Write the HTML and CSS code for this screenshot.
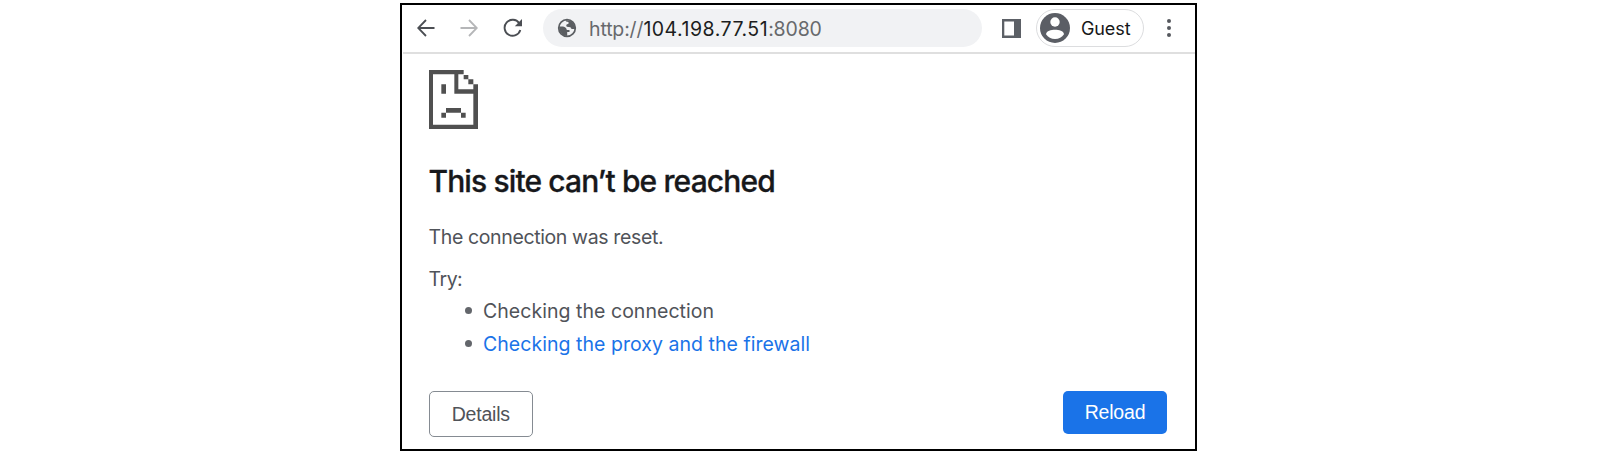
FILE: index.html
```html
<!DOCTYPE html>
<html lang="en">
<head>
<meta charset="utf-8">
<title>This site can’t be reached</title>
<link rel="stylesheet" href="styles.css">
</head>
<body>
<div class="window">
  <header class="toolbar">
    <svg class="nav back" viewBox="0 0 18 18"><path d="M17.5 9H1.5M9 1L1.2 9L9 17"/></svg>
    <svg class="nav forward" viewBox="0 0 18 18"><path d="M.5 9h16M9 1l7.8 8L9 17"/></svg>
    <svg class="nav reload" viewBox="0 0 20 20"><path d="M17.3 12A8 8 0 1 1 16.2 5.2"/><path class="solid" d="M19 1v7.2h-7.200z"/></svg>
    <div class="address">
      <svg class="globe" viewBox="0 0 20 20"><circle cx="10" cy="10" r="8.300"/><path d="M9.300 2 L15 3.500 L18.200 8.500 L18.300 11 L15 11 Q13.800 11 13.500 9.300 L9.800 8.800 Q8.700 8 9.600 6.500 L11.500 5.800 V4 L9 3.600Z M2 8.500 H6 Q9.500 9 9.800 12 H12.500 V14 H10.200 V18 L6.500 17.500 L2.500 13Z"/></svg>
      <span class="url">http://<b>104.198.77.51</b>:8080</span>
    </div>
    <svg class="panel" viewBox="0 0 19 19"><path d="M0 0h19v19H0zM2.300 2.600v13.800h9.700V2.600z" fill-rule="evenodd"/></svg>
    <div class="profile">
      <svg class="avatar" viewBox="0 0 30 30"><circle class="disc" cx="15" cy="15" r="15"/><circle cx="15" cy="9" r="4.700"/><path d="M6 21.300C6.500 17.600 11 16.700 15 16.700S23.500 17.600 24 21.300C22 24.300 18.800 26 15 26S8 24.300 6 21.300Z"/></svg>
      <span>Guest</span>
    </div>
    <svg class="more" viewBox="0 0 4 18"><circle cx="2" cy="2" r="2"/><circle cx="2" cy="9" r="2"/><circle cx="2" cy="16" r="2"/></svg>
  </header>
  <main class="content">
    <svg class="sad" viewBox="0 0 147 177"><path d="M0 0h104v13H88v45h45V43h14v134H0zM12 13v151h121V71H76V13z" fill-rule="evenodd"/><path d="M104 15h14v13h-14zM118 28h15v15h-15zM37 43h14v28H37zM51 114h45v14H51zM37 128h14v15H37zM96 128h14v15H96z"/></svg>
    <h1>This site can’t be reached</h1>
    <p class="reason">The connection was reset.</p>
    <p class="try">Try:</p>
    <ul>
      <li><span class="tip">Checking the connection</span></li>
      <li><a class="link">Checking the proxy and the firewall</a></li>
    </ul>
    <div class="actions">
      <button class="details">Details</button>
      <button class="primary">Reload</button>
    </div>
  </main>
</div>
</body>
</html>
```
FILE: styles.css
```css
* { box-sizing: border-box; }
body { margin: 0; background: #fff; font-family: Inter, "Liberation Sans", sans-serif; }
svg { display: block; flex: none; }
.window { width: 797px; height: 448px; margin: 3px 0 0 400px; border: 2px solid #000; background: #fff; }
.toolbar { display: flex; align-items: center; height: 49px; margin-left: 1px; padding: 0 0 1px 14px; border-bottom: 2px solid #dfdfdf; }
.nav { width: 18px; height: 18px; fill: none; stroke: #4b4e53; stroke-width: 1.8; }
.forward { margin-left: 25px; stroke: #b5b6b8; }
.reload { width: 20px; height: 20px; margin-left: 25px; stroke-width: 1.9; }
.reload .solid { fill: #4b4e53; stroke: none; }
.address { display: flex; align-items: center; width: 439px; height: 38px; margin-left: 20px; padding-left: 14px; border-radius: 19px; background: #f1f2f4; }
.globe { width: 20px; height: 20px; fill: #5b5e62; }
.globe circle { fill: none; stroke: #5b5e62; stroke-width: 1.7; }
.url { margin-left: 12px; padding-top: 1px; font-size: 19.500px; line-height: 24px; letter-spacing: -.15px; color: #67696c; white-space: nowrap; }
.url b { font-weight: 400; letter-spacing: .5px; color: #1c1d20; }
.panel { width: 19px; height: 19px; margin-left: 20px; fill: #5c6066; }
.profile { display: flex; align-items: center; width: 108px; height: 38px; margin-left: 15px; padding-left: 3px; border: 1px solid #dcdddf; border-radius: 19px; font-size: 18px; letter-spacing: -.1px; color: #161719; }
.profile span { margin-left: 11px; }
.avatar { width: 30px; height: 30px; fill: #fff; }
.avatar .disc { fill: #5b5e65; }
.more { width: 4px; height: 18px; margin-left: 23px; fill: #55585e; }
.content { padding: 16px 28px 0 26.500px; color: #505359; font-size: 19.500px; }
.sad { width: 49px; height: 59px; fill: #505050; }
h1 { margin: 32px 0 0; font-size: 30px; line-height: 40px; font-weight: 500; letter-spacing: -.88px; color: #17181b; -webkit-text-stroke: .3px #17181b; white-space: nowrap; }
p { margin: 0; line-height: 26px; }
.reason { margin-top: 23px; letter-spacing: -.37px; }
.try { margin-top: 16px; letter-spacing: -.5px; }
ul { margin: 2px 0 0; padding: 0 0 0 36.500px; list-style: none; }
li { display: flex; align-items: center; height: 33px; letter-spacing: .04px; }
li::before { content: ""; width: 7px; height: 7px; margin-right: 11px; border-radius: 50%; background: #63666b; }
.link { color: #1a73e8; }
.actions { display: flex; justify-content: space-between; align-items: flex-start; margin-top: 31px; }
button { padding: 0; border-radius: 5px; font: 19.500px "Liberation Sans", Arial, sans-serif; letter-spacing: -.2px; }
.details { width: 104.500px; height: 46px; border: 1px solid #858b92; background: #fff; color: #505359; }
.primary { width: 104px; height: 43px; border: 0; background: #1a73e8; color: #fff; }
```
